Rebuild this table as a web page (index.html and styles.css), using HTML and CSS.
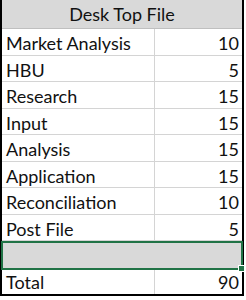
FILE: index.html
```html
<!DOCTYPE html>
<html>
<head>
<meta charset="utf-8">
<link rel="stylesheet" href="styles.css">
</head>
<body>
<div class="sheet">
  <div class="row head"><div class="cell title">Desk Top File</div></div>
  <div class="row"><div class="cell name">Market Analysis</div><div class="cell num">10</div></div>
  <div class="row"><div class="cell name">HBU</div><div class="cell num">5</div></div>
  <div class="row"><div class="cell name">Research</div><div class="cell num">15</div></div>
  <div class="row"><div class="cell name">Input</div><div class="cell num">15</div></div>
  <div class="row"><div class="cell name">Analysis</div><div class="cell num">15</div></div>
  <div class="row"><div class="cell name">Application</div><div class="cell num">15</div></div>
  <div class="row"><div class="cell name">Reconciliation</div><div class="cell num">10</div></div>
  <div class="row"><div class="cell name">Post File</div><div class="cell num">5</div></div>
  <div class="row sel"><span class="handle"></span></div>
  <div class="row total"><div class="cell name">Total</div><div class="cell num">90</div></div>
</div>
</body>
</html>
```
FILE: styles.css
```css
html, body { margin: 0; padding: 0; background: #fff; }
body { font-family: "Lato", "Open Sans", sans-serif; color: #111; }
.sheet {
  width: 240px;
  border-left: 2px solid #000;
  border-right: 2px solid #000;
  border-bottom: 2px solid #000;
  display: flex;
  flex-direction: column;
}
.row {
  display: grid;
  grid-template-columns: 153px 1fr;
  height: 26.5px;
  border-bottom: 1px solid #d4d4d4;
  box-sizing: border-box;
  position: relative;
  align-items: center;
}
.cell {
  font-size: 18px;
  line-height: 26px;
  white-space: nowrap;
}
.name { padding-left: 4px; border-right: 1px solid #d4d4d4; height: 100%; padding-top: 1px; box-sizing: border-box; }
.num { text-align: right; padding-right: 3px; padding-top: 1px; }
.head { display: flex; height: 29px; background: #d9d9d9; border-bottom: 1px solid #bfbfbf; }
.title { flex: 1; text-align: center; }
.sel {
  display: block;
  height: 29px;
  background: #d9d9d9;
  border: 2px solid #217346;
  margin-left: -1px;
  margin-right: -1px;
}
.handle {
  position: absolute;
  right: -4px;
  bottom: -4px;
  width: 5px;
  height: 5px;
  background: #217346;
  border: 1px solid #fff;
}
.total { height: 24px; border-bottom: none; }
.total .cell { line-height: 24px; padding-top: 0; }
```
